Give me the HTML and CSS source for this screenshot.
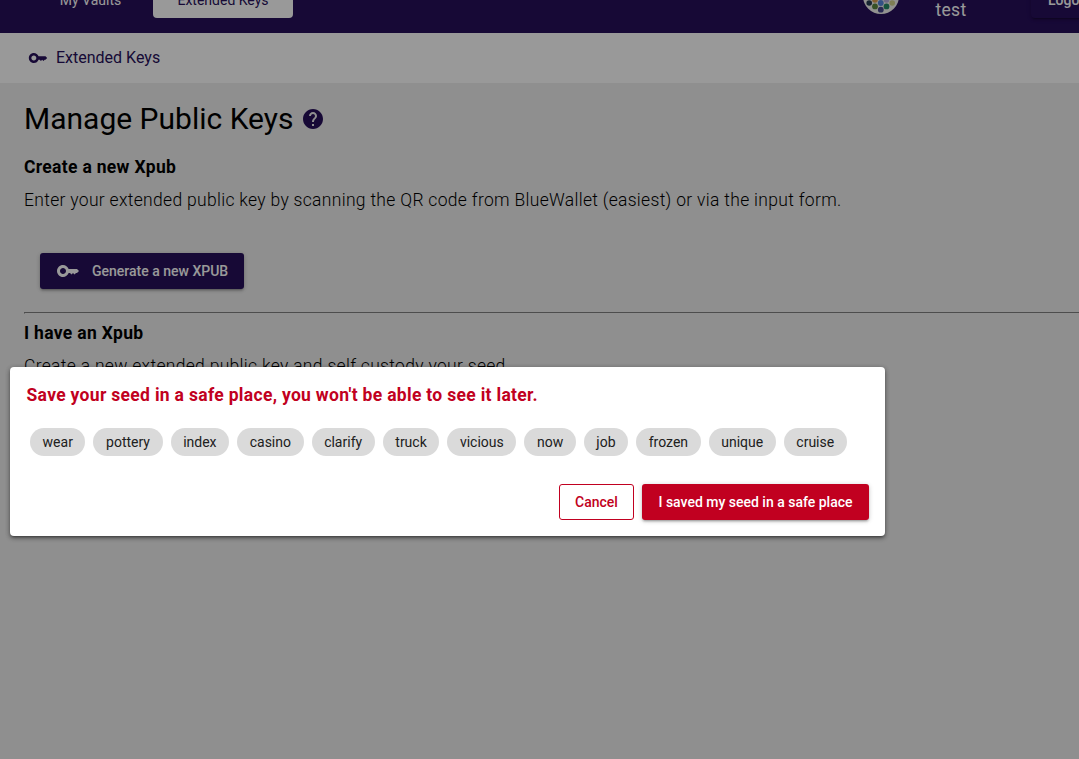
FILE: index.html
```html
<!DOCTYPE html>
<html lang="en">
<head>
<meta charset="utf-8">
<title>Extended Keys</title>
<link rel="stylesheet" href="styles.css">
</head>
<body>
<div class="app">
  <header class="topbar">
    <nav class="tabs">
      <a class="tab">My Vaults</a>
      <a class="tab active">Extended Keys</a>
    </nav>
    <div class="account">
      <svg class="avatar" viewBox="0 0 36 36"><circle cx="18" cy="18" r="18" fill="#f3f3f1"/><g><circle cx="12" cy="22" r="2.800" fill="#e0a050"/><circle cx="23.500" cy="22" r="2.800" fill="#b7b0e0"/><circle cx="6.200" cy="25" r="2.800" fill="#263c52"/><circle cx="17.800" cy="25" r="2.900" fill="#5688dc"/><circle cx="29.200" cy="25" r="2.800" fill="#d2d28c"/><circle cx="12" cy="28.400" r="2.900" fill="#5c8740"/><circle cx="23.500" cy="28.400" r="2.900" fill="#258b66"/><circle cx="17.800" cy="31.700" r="2.900" fill="#46478b"/></g></svg>
      <span class="username">test</span>
      <button class="logout">Logout</button>
    </div>
  </header>
  <div class="crumb">
    <svg class="crumb-icon" viewBox="0 0 24 24"><path d="M12.650 10C11.830 7.670 9.610 6 7 6c-3.310 0-6 2.690-6 6s2.690 6 6 6c2.610 0 4.830-1.670 5.650-4H14l1.500 1.500L17 14l1.500 1.500L20 14h1l2-2-2-2h-8.350zM7 15c-1.650 0-3-1.350-3-3s1.350-3 3-3 3 1.350 3 3-1.350 3-3 3z"/></svg>
    <span class="crumb-label">Extended Keys</span>
  </div>
  <main class="content">
    <div class="title-row">
      <h1>Manage Public Keys</h1>
      <svg class="help" viewBox="0 0 24 24"><path d="M12 2C6.480 2 2 6.480 2 12s4.480 10 10 10 10-4.480 10-10S17.520 2 12 2zm1 17h-2v-2h2v2zm2.070-7.750-.9.920C13.450 12.900 13 13.500 13 15h-2v-.5c0-1.100.45-2.100 1.170-2.830l1.240-1.260c.37-.36.590-.86.590-1.410 0-1.100-.9-2-2-2s-2 .9-2 2H8c0-2.210 1.790-4 4-4s4 1.790 4 4c0 .88-.36 1.680-.93 2.250z"/></svg>
    </div>
    <h2>Create a new Xpub</h2>
    <p class="enter">Enter your extended public key by scanning the QR code from BlueWallet (easiest) or via the input form.</p>
    <button class="generate">
      <svg viewBox="0 0 24 24"><path d="M12.650 10C11.830 7.670 9.610 6 7 6c-3.310 0-6 2.690-6 6s2.690 6 6 6c2.610 0 4.830-1.670 5.650-4H14l1.500 1.500L17 14l1.500 1.500L20 14h1l2-2-2-2h-8.350zM7 15c-1.650 0-3-1.350-3-3s1.350-3 3-3 3 1.350 3 3-1.350 3-3 3z"/></svg>
      <span>Generate a new XPUB</span>
    </button>
    <hr>
    <h2>I have an Xpub</h2>
    <p class="own">Create a new extended public key and self custody your seed.</p>
  </main>
</div>
<div class="backdrop"></div>
<section class="dialog" role="dialog">
  <h3>Save your seed in a safe place, you won't be able to see it later.</h3>
  <div class="chips">
    <span class="chip">wear</span><span class="chip">pottery</span><span class="chip">index</span><span class="chip">casino</span><span class="chip">clarify</span><span class="chip">truck</span><span class="chip">vicious</span><span class="chip">now</span><span class="chip">job</span><span class="chip">frozen</span><span class="chip">unique</span><span class="chip">cruise</span>
  </div>
  <div class="actions">
    <button class="cancel">Cancel</button>
    <button class="confirm">I saved my seed in a safe place</button>
  </div>
</section>
</body>
</html>
```
FILE: styles.css
```css
* { box-sizing: border-box; }
body { margin: 0; height: 759px; overflow: hidden; position: relative; font-family: Roboto, sans-serif; background: #efefef; color: #000; }
button { font: 500 14px/20px Roboto, sans-serif; border: 0; white-space: nowrap; }
h1, h2, h3, p { margin: 0; white-space: nowrap; }
.app { height: 759px; width: 1079px; overflow: hidden; }
.topbar { height: 33px; background: #270f5b; display: flex; justify-content: space-between; align-items: flex-end; padding-left: 28px; overflow: hidden; }
.tabs { display: flex; padding-bottom: 15px; }
.tab { flex: none; display: flex; align-items: center; justify-content: center; height: 36px; width: 125px; color: #fff; font-size: 14px; border-radius: 4px; }
.tab.active { background: #fff; color: #270f5b; width: 140px; }
.account { display: flex; align-items: flex-end; flex: none; width: 217px; padding-bottom: 11px; }
.avatar { flex: none; width: 36px; height: 36px; margin: 0 37px 8px .5px; }
.username { flex: none; width: 95.5px; color: #fff; font-size: 17.5px; line-height: 24px; letter-spacing: .3px; }
.logout { flex: none; height: 36px; margin-bottom: 4px; padding: 0 17px; background: #270f5b; color: #fff; border-radius: 4px; box-shadow: 0 3px 1px -2px rgba(0,0,0,.2), 0 2px 2px rgba(0,0,0,.14), 0 1px 5px rgba(0,0,0,.12); }
.crumb { height: 50px; background: #fff; display: flex; align-items: center; gap: 8px; padding-left: 28px; color: #270f5b; font-size: 16px; }
.crumb-icon { width: 20px; height: 20px; fill: #270f5b; }
.crumb-label { padding-bottom: 2px; }
.content { padding: 16px 0 0 24px; }
.title-row { display: flex; align-items: center; height: 40px; gap: 8px; }
h1 { font-size: 30px; line-height: 40px; font-weight: 400; }
.help { width: 24px; height: 24px; fill: #270f5b; }
h2 { font-size: 17.5px; line-height: 24px; font-weight: 700; letter-spacing: .308px; }
.title-row + h2 { margin-top: 16px; }
p { font-size: 17.5px; line-height: 24px; font-weight: 300; letter-spacing: .308px; margin-top: 9px; }
.generate { display: flex; align-items: center; gap: 12px; width: 204px; height: 36px; margin: 41px 0 0 16px; padding: 0 0 0 16px; border-radius: 3px; background: #270f5b; color: #fff; box-shadow: 0 1px 5px rgba(0,0,0,.2), 0 2px 2px rgba(0,0,0,.14), 0 3px 1px -2px rgba(0,0,0,.12); }
.generate svg { width: 24px; height: 24px; fill: #fff; flex: none; }
hr { margin: 23px 0 7px; height: 2px; border: 1px solid #808080; border-right: 0; border-bottom-color: #efefef; }
.backdrop { position: absolute; inset: 0; background: rgba(0,0,0,.4); }
.dialog { position: absolute; left: 10px; top: 367px; width: 875px; height: 169px; padding: 16px; background: #fff; border-radius: 4px; box-shadow: 0 1px 5px rgba(0,0,0,.2), 0 2px 2px rgba(0,0,0,.14), 0 3px 1px -2px rgba(0,0,0,.12), 0 2px 5px rgba(0,0,0,.3); }
h3 { padding-left: .5px; font-size: 17.5px; line-height: 24px; font-weight: 700; color: #c10020; letter-spacing: .308px; }
.chips { display: flex; gap: 8px; padding: 21px 4px 0; }
.chip { flex: none; height: 28px; line-height: 28px; padding: 0 12.580px; border-radius: 14px; background: #dadada; color: #202020; font-size: 14px; }
.actions { display: flex; justify-content: flex-end; gap: 8px; margin-top: 28px; }
.actions button { height: 36px; padding: 0; border-radius: 3px; }
.actions .cancel { width: 75px; color: #c10020; background: #fff; border: 1px solid #c10020; }
.actions .confirm { width: 227px; color: #fff; background: #c10020; box-shadow: 0 1px 5px rgba(0,0,0,.2), 0 2px 2px rgba(0,0,0,.14), 0 3px 1px -2px rgba(0,0,0,.12); }
```
